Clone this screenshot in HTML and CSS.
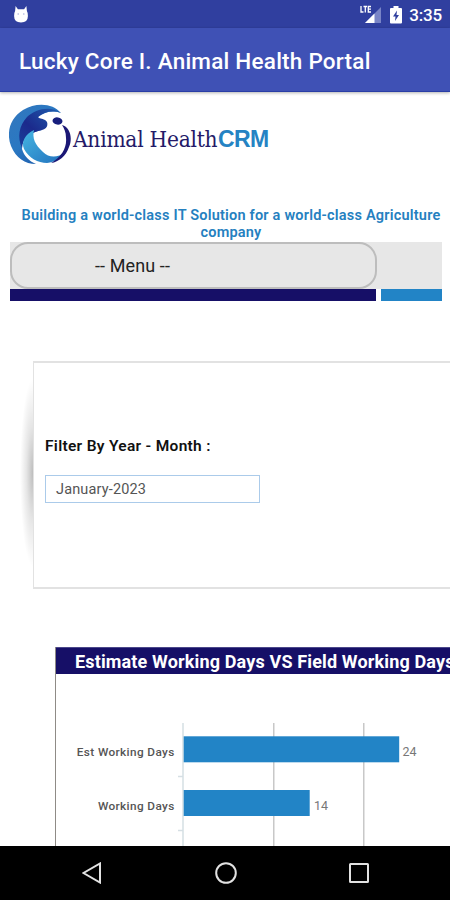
FILE: index.html
```html
<!DOCTYPE html>
<html lang="en">
<head>
<meta charset="utf-8">
<title>Lucky Core I. Animal Health Portal</title>
<link rel="stylesheet" href="styles.css">
</head>
<body>
<div class="screen">
  <header class="status">
    <svg class="cat" width="18" height="20" viewBox="0 0 18 20"><path d="M3.600 1l2.300 3.200h6.200l2.300-3.200 .5 5q1 1.500 1 5 0 6.500-6.900 6.500t-6.900-6.500q0-3.500 1-5z" fill="#fff"/><circle cx="6.200" cy="9" r=".8" fill="#a9b0dc"/><circle cx="11.800" cy="9" r=".8" fill="#a9b0dc"/></svg>
    <div class="status-right">
      <svg class="signal" width="22" height="18" viewBox="0 0 22 18"><path d="M21 2v16H5z" fill="#7984c6"/><path d="M14.500 8.500V18H5z" fill="#fff"/><path d="M1 1v6h2.500M3.500 1.500h3.500M5.300 1.500v6M11 1.500H8.300v5.500H11M8.300 4.200H11" fill="none" stroke="#fff" stroke-width="1.300"/></svg>
      <svg class="battery" width="12" height="18" viewBox="0 0 12 18"><path d="M3.500 0h5v2H11q1 0 1 1v13.500q0 1-1 1H1q-1 0-1-1V3q0-1 1-1h2.500z" fill="#fff"/><path d="M7 4.500L3 10.500h2.500L5 15l4-6H6.500z" fill="#303f9f"/></svg>
      <span class="clock">3:35</span>
    </div>
  </header>
  <div class="appbar"><h1>Lucky Core I. Animal Health Portal</h1></div>
  <main>
    <div class="brand">
      <svg class="mark" width="63" height="62" viewBox="0 0 63 62">
        <defs>
          <linearGradient id="ring" x1="0" y1="0" x2="1" y2="1"><stop offset="0" stop-color="#3377bd"/><stop offset=".45" stop-color="#2a78c2"/><stop offset="1" stop-color="#174e9f"/></linearGradient>
          <linearGradient id="fin" x1="1" y1="0" x2="0" y2="1"><stop offset="0" stop-color="#1f5fb0"/><stop offset=".6" stop-color="#1b2a8c"/><stop offset="1" stop-color="#1a3f9a"/></linearGradient>
          <linearGradient id="wave" x1="0" y1="0" x2="1" y2="1"><stop offset="0" stop-color="#45b6e2"/><stop offset="1" stop-color="#2170bd"/></linearGradient>
        </defs>
        <path d="M52 9C44-1 27-2 14 6C1 14-3 29 2 42C7 54 16 60 27 60C20 57 15 52 13 45C13 33 22 28 33 26L29 13C35 8 44 6 52 9Z" fill="url(#ring)"/>
        <path d="M52 9C42 1 26 5 18 13C10 22 8 33 13 44C13 34 23 28 33 26C39 25 40 18 36 16C33 14 30 15 29 13C35 8 43 6 52 9Z" fill="url(#fin)"/>
        <path d="M25 26C16 30 12 38 15 45C20 54 29 59 38 59C46 58 52 55 56 48C49 54 40 54 34 48C26 41 23 34 25 26Z" fill="url(#wave)"/>
        <ellipse cx="48.500" cy="17" rx="5" ry="3.600" transform="rotate(8 48.500 17)" fill="#171f7d"/>
        <path d="M53 21C61 23 64 34 60 43C57 52 50 58 42 59C53 53 58 43 57 34C57 28 55 24 53 21Z" fill="#1b1775"/>
      </svg>
      <span class="brand-a">Animal Health</span><span class="brand-b">CRM</span>
    </div>
    <p class="tagline">Building a world-class IT Solution for a world-class Agriculture company</p>
    <nav class="menu"><div class="select">-- Menu --</div></nav>
    <div class="stripes"><i class="navy"></i><i class="blue"></i></div>
    <section class="filter">
      <label class="label">Filter By Year - Month :</label>
      <div class="field">January-2023</div>
    </section>
    <section class="chart">
      <h2>Estimate Working Days VS Field Working Days</h2>
      <svg class="plot" width="393" height="172" viewBox="0 0 393 172">
        <g fill="#c8c8c8"><rect x="217" y="49" width="1.500" height="123"/><rect x="307" y="49" width="1.500" height="123"/></g>
        <path d="M127 49V172M122 102.500h5M122 156.500h5" stroke="#d5dfe4" stroke-width="1.500" fill="none"/>
        <g fill="#2284c6"><rect x="127.700" y="62.300" width="215.500" height="26"/><rect x="127.700" y="116" width="126" height="26"/></g>
        <g class="cat-label"><text x="118.700" y="82.300">Est Working Days</text><text x="118.700" y="136.300">Working Days</text></g>
        <g class="val"><text x="346.500" y="81.800">24</text><text x="258" y="135.500">14</text></g>
      </svg>
    </section>
  </main>
  <footer class="navbar">
    <svg width="20" height="22" viewBox="0 0 20 22"><path d="M18 1.500v19L1.500 11z" /></svg>
    <svg width="22" height="22" viewBox="0 0 22 22"><circle cx="11" cy="11" r="9.800"/></svg>
    <svg width="20" height="20" viewBox="0 0 20 20"><rect x="1" y="1" width="18" height="18" rx=".5"/></svg>
  </footer>
</div>
</body>
</html>
```
FILE: styles.css
```css
* { box-sizing: border-box; }
body { margin: 0; font-family: Roboto, "Liberation Sans", sans-serif; background: #fff; }
h1, h2, p { margin: 0; }
svg { display: block; flex: none; }
.screen { width: 450px; height: 900px; overflow: hidden; display: flex; flex-direction: column; }
.status { height: 28px; flex: none; background: #303f9f; display: flex; align-items: center; justify-content: space-between; padding: 0 8px 0 12px; }
.cat { margin-bottom: -1px; }
.status-right { display: flex; align-items: center; gap: 8px; }
.clock { color: #fff; font-size: 17px; font-weight: 500; line-height: 28px; margin-left: -1px; padding-top: 2px; letter-spacing: -.2px; }
.signal { margin-top: -1px; }
.battery { margin-top: 1px; }
.appbar { height: 64px; flex: none; background: #3f51b5; border-bottom: 1px solid #2a3ea6; padding-left: 19px; display: flex; align-items: center; position: relative; box-shadow: 0 1px 3px rgba(0,0,0,.3); }
h1 { color: #fff; font-size: 22.5px; font-weight: 500; white-space: nowrap; line-height: 28px; padding-top: 3px; letter-spacing: .23px; }
main { flex: 1; min-height: 0; overflow: hidden; padding-left: 9px; }
.brand { display: flex; height: 74px; margin-top: 12px; white-space: nowrap; }
.brand-a { font: 22.5px/28px "DejaVu Serif Condensed", "DejaVu Serif", serif; font-stretch: condensed; color: #241a68; margin: 21px 0 0 1px; width: 145px; letter-spacing: -.25px; }
.brand-b { font: bold 23px/28px "Liberation Sans", sans-serif; color: #2583c3; margin: 21px 0 0; letter-spacing: -.6px; }
.tagline { width: 432px; margin-top: 29px; padding-left: 12px; color: #2580bf; font-size: 14.5px; line-height: 17px; font-weight: 600; text-align: center; height: 35px; letter-spacing: .21px; }
.menu { width: 432px; margin-left: 1px; height: 47px; background: #e7e7e7; }
.select { width: 367px; height: 47px; border: 2px solid #bdbdbd; border-radius: 18px; padding-left: 83px; font-size: 18px; line-height: 44px; color: #222; letter-spacing: .1px; }
.stripes { display: flex; gap: 5px; width: 432px; margin-left: 1px; height: 12px; }
.navy { width: 366px; background: #160f67; }
.blue { flex: 1; background: #2284c6; }
.filter { position: relative; margin: 60px 0 0 24px; height: 228px; border: 1px solid #e2e2e2; border-width: 2px 0 2px 1px; padding: 73px 0 0 11px; background: #fff; }
.filter::before { content: ""; position: absolute; left: -14px; top: 16px; width: 13px; height: 188px; background: radial-gradient(ellipse 13px 94px at right center, rgba(0,0,0,.26), rgba(0,0,0,.1) 50%, transparent); }
.label { display: block; font-size: 15.5px; font-weight: 600; line-height: 20px; color: #111; letter-spacing: .3px; }
.field { margin-top: 19px; width: 215px; height: 28px; border: 1.500px solid #abcbea; padding-left: 10px; font-size: 14.5px; line-height: 28px; color: #555; letter-spacing: .15px; }
.chart { margin: 58px 0 0 46px; width: 395px; border-left: 1px solid #8f8b86; height: 210px; }
h2 { height: 27px; background: #160f67; border-top: 1px solid #4b478a; color: #fff; font-size: 18px; font-weight: 700; line-height: 27px; padding-left: 19px; white-space: nowrap; overflow: hidden; letter-spacing: .15px; }
.cat-label { font-size: 11.8px; font-weight: 500; fill: #555; text-anchor: end; letter-spacing: .38px; }
.val { font-size: 12.5px; fill: #777; }
.navbar { height: 54px; flex: none; background: #000; display: flex; align-items: center; justify-content: space-between; padding: 0 81px 0 82px; }
.navbar path, .navbar circle, .navbar rect { fill: none; stroke: #e2e2e2; stroke-width: 2; }
```
